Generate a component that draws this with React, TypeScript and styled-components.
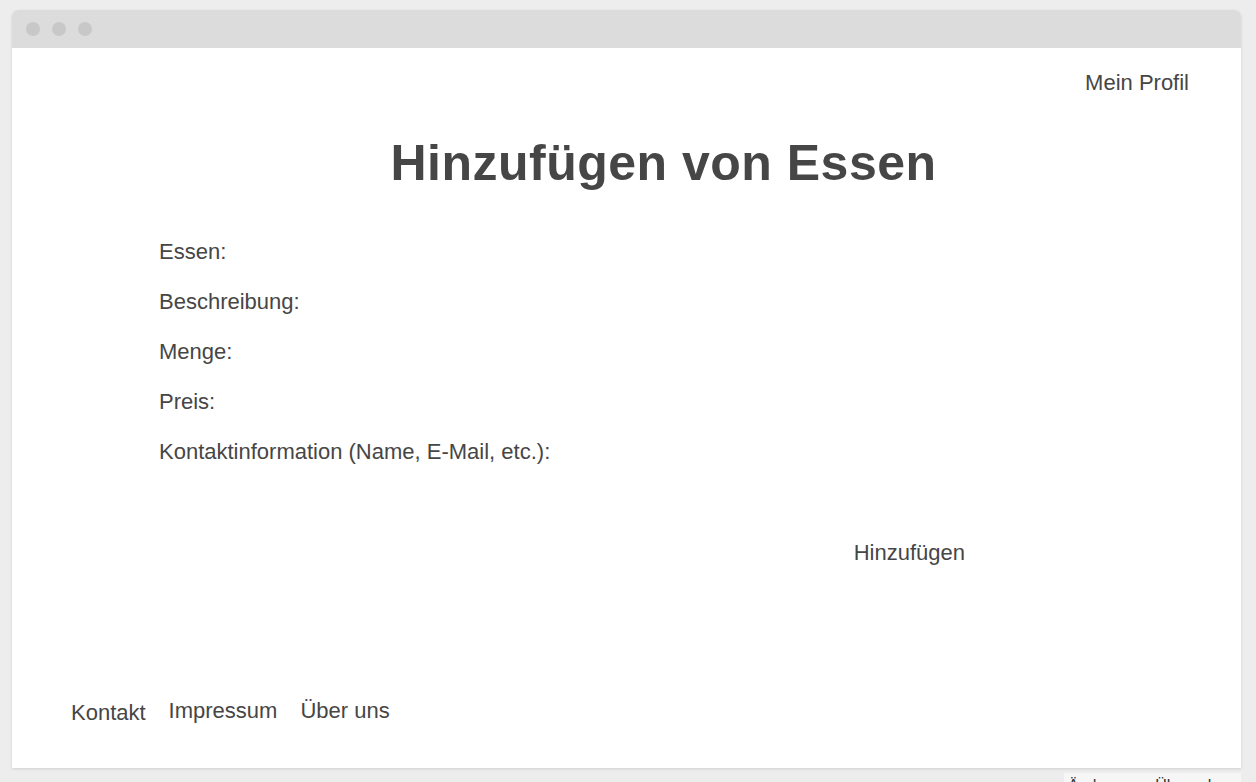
import styled, { createGlobalStyle } from 'styled-components';

const GlobalStyle = createGlobalStyle`
  html, body {
    margin: 0;
    padding: 0;
    background: #ededed;
    font-family: "Liberation Sans", Arial, sans-serif;
    color: #464646;
    overflow: hidden;
  }
`;

const fields = ['Essen:', 'Beschreibung:', 'Menge:', 'Preis:', 'Kontaktinformation (Name, E-Mail, etc.):'];

export default function App() {
  return (
    <>
      <GlobalStyle />
      <Page>
        <Window>
          <TitleBar>
            <Dot />
            <Dot />
            <Dot />
          </TitleBar>
          <Body>
            <Header>
              <NavLink>Mein Profil</NavLink>
            </Header>
            <Title>Hinzufügen von Essen</Title>
            <Form>
              {fields.map((f) => (
                <FieldLabel key={f}>{f}</FieldLabel>
              ))}
            </Form>
            <ButtonRow>
              <SubmitButton>Hinzufügen</SubmitButton>
            </ButtonRow>
            <Footer>
              <FooterLink $drop>Kontakt</FooterLink>
              <FooterLink>Impressum</FooterLink>
              <FooterLink>Über uns</FooterLink>
            </Footer>
          </Body>
        </Window>
        <Peek>
          <PeekText>Änderungen</PeekText>
          <PeekText>Übernehmen</PeekText>
        </Peek>
      </Page>
    </>
  );
}

const Page = styled.div`
  width: 1256px;
  height: 782px;
  padding: 10px 15px 0 12px;
  box-sizing: border-box;
  display: flex;
  flex-direction: column;
  overflow: hidden;
`;

const Window = styled.div`
  width: 1229px;
  height: 758px;
  flex-shrink: 0;
  background: #ffffff;
  border-radius: 6px 6px 0 0;
  box-shadow: 0 1px 3px rgba(0, 0, 0, 0.12);
  display: flex;
  flex-direction: column;
  overflow: hidden;
`;

const TitleBar = styled.div`
  height: 38px;
  background: #dcdcdc;
  display: flex;
  align-items: center;
  gap: 12px;
  padding-left: 14px;
`;

const Dot = styled.span`
  width: 14px;
  height: 14px;
  border-radius: 50%;
  background: #c8c8c8;
`;

const Body = styled.div`
  flex: 1;
  display: flex;
  flex-direction: column;
`;

const Header = styled.div`
  display: flex;
  justify-content: flex-end;
  padding: 22px 52px 0 0;
`;

const NavLink = styled.a`
  font-size: 22px;
  line-height: 25px;
  color: #464646;
`;

const Title = styled.h1`
  margin: 40px 0 0 74px;
  text-align: center;
  font-size: 50px;
  line-height: 56px;
  font-weight: 700;
  color: #464646;
  letter-spacing: 0.5px;
`;

const Form = styled.div`
  display: flex;
  flex-direction: column;
  padding-left: 147px;
  margin-top: 36px;
`;

const FieldLabel = styled.label`
  font-size: 22px;
  line-height: 50px;
  color: #464646;
`;

const ButtonRow = styled.div`
  display: flex;
  justify-content: flex-end;
  padding-right: 276px;
  margin-top: 63px;
`;

const SubmitButton = styled.span`
  font-size: 22px;
  line-height: 25px;
  color: #464646;
  cursor: pointer;
`;

const Footer = styled.div`
  margin-top: auto;
  display: flex;
  align-items: flex-start;
  gap: 23px;
  padding: 0 0 43px 59px;
`;

const FooterLink = styled.a<{ $drop?: boolean }>`
  font-size: 22px;
  line-height: 25px;
  color: #464646;
  margin-top: ${(p) => (p.$drop ? '2px' : '0')};
`;

const Peek = styled.div`
  align-self: flex-end;
  width: 177px;
  height: 14px;
  margin-top: 5px;
  background: #f6f6f6;
  display: flex;
  justify-content: space-between;
  padding: 0 18px 0 4px;
  box-sizing: border-box;
  overflow: hidden;
`;

const PeekText = styled.span`
  font-size: 16px;
  line-height: 26px;
  color: #333333;
  white-space: nowrap;
`;
